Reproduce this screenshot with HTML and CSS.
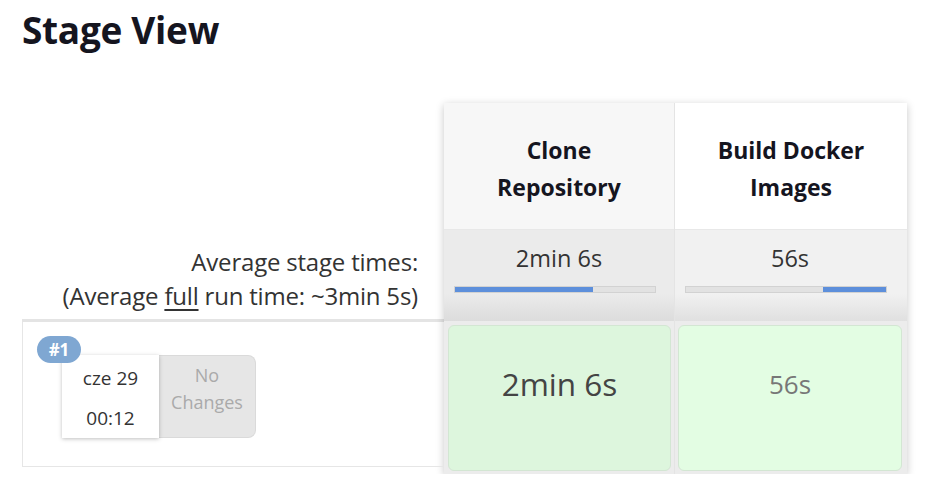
FILE: index.html
```html
<!DOCTYPE html>
<html lang="pl">
<head>
<meta charset="utf-8">
<title>Stage View</title>
<link rel="stylesheet" href="styles.css">
</head>
<body>
<h2 class="title">Stage View</h2>
<div class="stage-view">
  <div class="left">
    <div class="left-head"></div>
    <div class="avg-label">
      <div>Average stage times:</div>
      <div>(Average <u>full</u> run time: ~3min 5s)</div>
    </div>
    <div class="build-row">
      <div class="badge">#1</div>
      <div class="build-card">
        <div class="date"><div>cze 29</div><div>00:12</div></div>
        <div class="changes">No<br>Changes</div>
      </div>
    </div>
  </div>
  <div class="table">
    <div class="head head-a">Clone<br>Repository</div>
    <div class="head head-b">Build Docker<br>Images</div>
    <div class="avg avg-a">
      <div class="avg-time">2min 6s</div>
      <div class="bar"><div class="fill" style="margin-left:0;width:69%"></div></div>
    </div>
    <div class="avg avg-b">
      <div class="avg-time">56s</div>
      <div class="bar"><div class="fill" style="margin-left:68.5%;width:31.5%"></div></div>
    </div>
    <div class="body-cell body-a"><div class="stage stage-a">2min 6s</div></div>
    <div class="body-cell body-b"><div class="stage stage-b">56s</div></div>
  </div>
</div>
</body>
</html>
```
FILE: styles.css
```css
* { box-sizing: border-box; }
html, body { margin: 0; padding: 0; background: #fff; }
body {
  font-family: "Open Sans", "Noto Sans", sans-serif;
  color: #333;
  padding: 0 22px;
  width: 945px;
}
.title {
  margin: 0;
  padding-top: 5px;
  height: 103px;
  font-size: 37px;
  font-weight: 700;
  line-height: 50px;
  color: #15151f;
  letter-spacing: -0.3px;
}
.stage-view {
  display: flex;
  align-items: flex-start;
}
.left {
  width: 422px;
  display: flex;
  flex-direction: column;
}
.left-head { height: 127px; }
.avg-label {
  height: 92px;
  border-bottom: 3px solid #e4e4e4;
  text-align: right;
  padding-right: 26px;
  padding-top: 15px;
  font-size: 24px;
  line-height: 34px;
  color: #333;
  letter-spacing: -0.2px;
}
.avg-label u { text-underline-offset: 4px; }
.build-row {
  position: relative;
  height: 145px;
  border-left: 1px solid #e6e6e6;
  border-bottom: 1px solid #e6e6e6;
  padding: 33px 0 0 39px;
}
.badge {
  position: absolute;
  left: 14px;
  top: 14px;
  width: 44px;
  height: 27px;
  border-radius: 14px;
  background: #7fa7d2;
  color: #fff;
  font-weight: 700;
  font-size: 17px;
  line-height: 27px;
  text-align: center;
  z-index: 2;
}
.build-card {
  display: flex;
  height: 83px;
}
.date {
  width: 97px;
  background: #fff;
  box-shadow: 0 1px 4px rgba(0,0,0,0.25);
  font-size: 19px;
  line-height: 40px;
  text-align: center;
  color: #333;
  padding-top: 3px;
  position: relative;
  z-index: 1;
}
.changes {
  width: 97px;
  background: #e6e6e6;
  border: 1px solid #dadada;
  border-left: none;
  border-radius: 0 8px 8px 0;
  color: #aaa;
  font-size: 18px;
  line-height: 27px;
  text-align: center;
  padding-top: 6px;
}
.table {
  width: 463px;
  display: grid;
  grid-template-columns: 230px 1fr;
  column-gap: 1px;
  background: #e4e4e4;
  box-shadow: 0 2px 8px rgba(0,0,0,0.22);
}
.head {
  height: 127px;
  display: flex;
  align-items: center;
  justify-content: center;
  text-align: center;
  font-weight: 700;
  font-size: 23px;
  line-height: 37px;
  color: #15151f;
  padding-top: 6px;
  border-bottom: 1px solid #e8e8e8;
}
.head-a { background: #f7f7f7; }
.head-b { background: #fff; }
.avg {
  height: 91px;
  padding: 13px 18px 0 10px;
  text-align: center;
}
.avg-b { padding: 13px 20px 0 10px; }
.avg-a { background: linear-gradient(#ebebeb 0%, #ebebeb 70%, #dcdcdc 100%); }
.avg-b { background: linear-gradient(#f1f1f1 0%, #f1f1f1 70%, #e0e0e0 100%); }
.avg-time {
  font-size: 23.5px;
  line-height: 30px;
  color: #333;
  padding-left: 8px;
}
.bar {
  margin-top: 13px;
  height: 7px;
  background: #e2e2e2;
  border: 1px solid #d2d2d2;
  display: flex;
}
.fill {
  height: 100%;
  background: #5d8fdb;
}
.body-cell {
  background: #ececec;
  padding: 4px 3px 3px 4px;
  height: 153px;
}
.body-b { padding: 4px 5px 3px 3px; }
.stage {
  height: 100%;
  border: 1px solid #d3e6d3;
  border-radius: 6px;
  display: flex;
  justify-content: center;
  padding-top: 36px;
}
.stage-a {
  background: #ddf6dd;
  font-size: 31.5px;
  line-height: 44px;
  color: #444;
}
.stage-b {
  background: #e3fde3;
  font-size: 26px;
  line-height: 44px;
  color: #777;
}
```
